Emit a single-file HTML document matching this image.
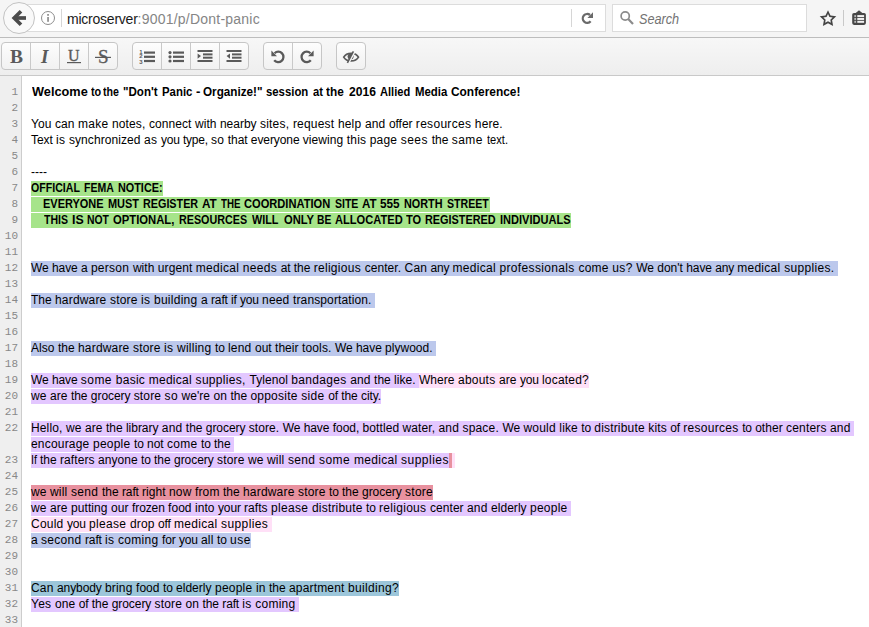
<!DOCTYPE html>
<html>
<head>
<meta charset="utf-8">
<title>Dont-panic</title>
<style>
html,body{margin:0;padding:0;}
body{width:869px;height:627px;overflow:hidden;position:relative;background:#fff;font-family:"Liberation Sans",sans-serif;}
svg{position:absolute;left:0;top:0;overflow:visible;}
/* ---------- browser chrome ---------- */
#chrome{position:absolute;left:0;top:0;width:869px;height:37px;background:#f5f5f5;border-bottom:1px solid #bdbdbd;box-sizing:content-box;}
#urlbar{position:absolute;left:20px;top:4px;width:584px;height:26px;border:1px solid #dcdcdc;background:#fff;box-sizing:content-box;}
#back{position:absolute;left:3px;top:2px;width:30px;height:30px;border-radius:16px;border:1px solid #c3c3c3;background:#f9f9f9;box-sizing:content-box;}
#urltext{position:absolute;left:67px;top:9px;letter-spacing:0.22px;font-size:14px;line-height:20px;color:#858585;white-space:nowrap;}
#urltext b{font-weight:normal;color:#1a1a1a;letter-spacing:-0.23px;}
#search{position:absolute;left:612px;top:4px;width:193px;height:26px;border:1px solid #dcdcdc;background:#fff;box-sizing:content-box;}
#searchtext{position:absolute;left:639px;top:9px;transform-origin:0 0;transform:scaleX(0.905);font-size:14px;line-height:20px;font-style:italic;color:#737373;}
.vsep{position:absolute;width:1px;background:#d6d6d6;}
/* ---------- etherpad toolbar ---------- */
#toolbar{position:absolute;left:0;top:38px;width:869px;height:37px;background:linear-gradient(#f7f7f7,#eeeeee);border-bottom:1px solid #c9c9c9;box-sizing:content-box;}
.grp{position:absolute;top:4px;height:26px;border:1px solid #c6c6c6;border-radius:4px;background:linear-gradient(#fdfdfd,#f1f1f1);box-sizing:content-box;}
.grp i{position:absolute;top:0;width:1px;height:26px;background:#c9c9c9;}
.gl{position:absolute;font-family:"Liberation Serif",serif;color:#5a5a5a;white-space:nowrap;}
/* ---------- editor ---------- */
#gutter{position:absolute;left:0;top:76px;width:21px;height:551px;background:#efefef;border-right:1px solid #cdcdcd;box-sizing:content-box;}
.n{position:absolute;left:0;width:18px;text-align:right;font-family:"Liberation Mono",monospace;font-size:11px;line-height:16px;height:16px;color:#888;}
.l{position:absolute;left:31px;height:15px;white-space:pre;font-size:12px;line-height:15px;color:#000;}
.l span{display:inline-block;height:15px;line-height:15px;vertical-align:top;white-space:pre;}
.l i{display:inline-block;font-style:normal;white-space:pre;height:15px;vertical-align:top;}
.l i b{display:inline-block;font-weight:inherit;transform-origin:0 0;white-space:pre;}
.l>b{position:absolute;top:0;font-weight:bold;transform-origin:0 0;white-space:pre;}
.B{font-weight:bold;}
.g{background:#a6e48a;font-weight:bold;}
.b{background:#bcc8ec;}
.p{background:#e3c7ff;}
.k{background:#ffe0f7;}
.r{background:#e8919f;}
.t{background:#9cc6da;}
</style>
</head>
<body>
<div id="chrome">
  <div id="urlbar"></div>
  <div id="back"></div>
  <div class="vsep" style="left:61px;top:9px;height:18px"></div>
  <div class="vsep" style="left:571px;top:9px;height:18px"></div>
  <div id="urltext"><b>microserver</b>:9001/p/Dont-panic</div>
  <div id="search"></div>
  <div id="searchtext">Search</div>
  <div class="vsep" style="left:843px;top:10px;height:16px;background:#c9c9c9"></div>
  <svg width="869" height="38" viewBox="0 0 869 38">
    <!-- back arrow -->
    <g fill="none" stroke="#4c4c4c" stroke-width="3.7">
      <polyline points="21,11.2 14.2,18 21,24.8" stroke-linejoin="miter"/>
      <line x1="14.5" y1="18" x2="26" y2="18"/>
    </g>
    <!-- info icon -->
    <circle cx="48" cy="18" r="6.5" fill="none" stroke="#8d8d8d" stroke-width="1"/>
    <rect x="47.2" y="17" width="1.7" height="4.8" fill="#8d8d8d"/>
    <rect x="47.2" y="14" width="1.7" height="1.8" fill="#8d8d8d"/>
    <!-- reload -->
    <path d="M590.0 15.0 A4.4 4.4 0 1 0 590.6 21.2" fill="none" stroke="#6a6a6a" stroke-width="2.3"/>
    <path d="M593 12.3 L593 18 L587.4 18 Z" fill="#6a6a6a"/>
    <!-- magnifier -->
    <circle cx="625.2" cy="16" r="4.1" fill="none" stroke="#8b8b8b" stroke-width="1.7"/>
    <line x1="628.2" y1="19" x2="633" y2="23.9" stroke="#8b8b8b" stroke-width="2.2"/>
    <!-- star -->
    <polygon points="828.00,10.20 830.53,15.42 836.27,16.21 832.09,20.23 833.11,25.94 828.00,23.20 822.89,25.94 823.91,20.23 819.73,16.21 825.47,15.42" fill="#454545"/>
    <polygon points="828.00,14.00 829.44,16.92 832.66,17.39 830.33,19.66 830.88,22.86 828.00,21.35 825.12,22.86 825.67,19.66 823.34,17.39 826.56,16.92" fill="#f5f5f5"/>
    <!-- bookmarks menu -->
    <rect x="852.2" y="12.9" width="13.7" height="12" rx="1.8" fill="#474747"/>
    <path d="M855.4 13.2 L859 10.2 L862.6 13.2 Z" fill="#474747"/>
    <g fill="#b9b9b9"><rect x="854.3" y="15.1" width="1.8" height="2"/><rect x="854.3" y="17.95" width="1.8" height="2"/><rect x="854.3" y="20.8" width="1.8" height="2"/></g>
    <g fill="#f2f2f2"><rect x="857.3" y="15.1" width="6.8" height="2"/><rect x="857.3" y="17.95" width="6.8" height="2"/><rect x="857.3" y="20.8" width="6.8" height="2"/></g>
  </svg>
</div>
<div id="toolbar">
  <div class="grp" style="left:1px;width:115px;"><i style="left:28px"></i><i style="left:57px"></i><i style="left:86px"></i></div>
  <div class="grp" style="left:132px;width:115px;"><i style="left:28px"></i><i style="left:57px"></i><i style="left:86px"></i></div>
  <div class="grp" style="left:263px;width:57px;"><i style="left:28px"></i></div>
  <div class="grp" style="left:336px;width:28px;"></div>
  <div class="gl" style="left:10px;top:8px;font-size:19.5px;line-height:22px;font-weight:bold;">B</div>
  <div class="gl" style="left:41px;top:8px;font-size:19px;line-height:22px;font-style:italic;font-weight:bold;">I</div>
  <div class="gl" style="left:68px;top:8px;font-size:16px;line-height:20px;-webkit-text-stroke:0.35px #5a5a5a;">U</div>
  <div class="gl" style="left:98px;top:8px;font-size:19px;line-height:22px;-webkit-text-stroke:0.35px #5a5a5a;">S</div>
  <svg width="869" height="38" viewBox="0 38 869 38">
    <g fill="#5a5a5a">
      <!-- underline / strike -->
      <rect x="67" y="62" width="14" height="1.2"/>
      <rect x="95" y="56.8" width="16" height="1.2"/>
      <!-- ordered list -->
      <rect x="144" y="51.5" width="11" height="2.2"/>
      <rect x="144" y="55.7" width="11" height="2.2"/>
      <rect x="144" y="59.9" width="11" height="2.2"/>
      <!-- unordered list -->
      <rect x="173" y="51.5" width="11" height="2.2"/>
      <rect x="173" y="55.7" width="11" height="2.2"/>
      <rect x="173" y="59.9" width="11" height="2.2"/>
      <circle cx="170" cy="52.6" r="1.6"/>
      <circle cx="170" cy="56.8" r="1.6"/>
      <circle cx="170" cy="61" r="1.6"/>
      <!-- indent -->
      <rect x="197.5" y="50" width="15" height="2"/>
      <rect x="203" y="53.4" width="9.5" height="2"/>
      <rect x="203" y="56.7" width="9.5" height="2"/>
      <rect x="197.5" y="60" width="15" height="2"/>
      <path d="M197.6 53.4 L201 56 L197.6 58.7 Z"/>
      <!-- outdent -->
      <rect x="226.5" y="50" width="15" height="2"/>
      <rect x="232" y="53.4" width="9.5" height="2"/>
      <rect x="232" y="56.7" width="9.5" height="2"/>
      <rect x="226.5" y="60" width="15" height="2"/>
      <path d="M230 53.4 L226.6 56 L230 58.7 Z"/>
    </g>
    <!-- ol numbers -->
    <g fill="#5a5a5a" font-family="Liberation Sans, sans-serif" font-size="6" font-weight="bold">
      <text x="139.3" y="53.6">1</text>
      <text x="139.3" y="58.4">2</text>
      <text x="139.3" y="63.6">3</text>
    </g>
    <!-- undo -->
    <path d="M274.2 60.2 A5.2 5.2 0 1 0 274.6 53.2" fill="none" stroke="#5a5a5a" stroke-width="2.3"/>
    <path d="M271.4 50.6 L271.4 56.2 L277 56.2 Z" fill="#5a5a5a"/>
    <!-- redo -->
    <path d="M310.8 60.2 A5.2 5.2 0 1 1 310.4 53.2" fill="none" stroke="#5a5a5a" stroke-width="2.3"/>
    <path d="M313.6 50.6 L313.6 56.2 L308 56.2 Z" fill="#5a5a5a"/>
    <!-- eye slash -->
    <path d="M343.7 57.1 C346.6 52.0 355.6 52.0 358.5 57.1 C355.6 62.2 346.6 62.2 343.7 57.1 Z" fill="none" stroke="#5a5a5a" stroke-width="1.7"/>
    <circle cx="350.6" cy="56.6" r="3" fill="#5a5a5a"/>
    <line x1="354.8" y1="51.2" x2="348.6" y2="62.8" stroke="#f6f6f6" stroke-width="2"/>
    <line x1="353.4" y1="51.4" x2="347.4" y2="62.8" stroke="#5a5a5a" stroke-width="1.6"/>
  </svg>
</div>
<div id="gutter"><div class="n" style="top:8px">1</div><div class="n" style="top:24px">2</div><div class="n" style="top:40px">3</div><div class="n" style="top:56px">4</div><div class="n" style="top:72px">5</div><div class="n" style="top:88px">6</div><div class="n" style="top:104px">7</div><div class="n" style="top:120px">8</div><div class="n" style="top:136px">9</div><div class="n" style="top:152px">10</div><div class="n" style="top:168px">11</div><div class="n" style="top:184px">12</div><div class="n" style="top:200px">13</div><div class="n" style="top:216px">14</div><div class="n" style="top:232px">15</div><div class="n" style="top:248px">16</div><div class="n" style="top:264px">17</div><div class="n" style="top:280px">18</div><div class="n" style="top:296px">19</div><div class="n" style="top:312px">20</div><div class="n" style="top:328px">21</div><div class="n" style="top:344px">22</div><div class="n" style="top:376px">23</div><div class="n" style="top:392px">24</div><div class="n" style="top:408px">25</div><div class="n" style="top:424px">26</div><div class="n" style="top:440px">27</div><div class="n" style="top:456px">28</div><div class="n" style="top:472px">29</div><div class="n" style="top:488px">30</div><div class="n" style="top:504px">31</div><div class="n" style="top:520px">32</div><div class="n" style="top:536px">33</div></div>
<div id="lines">
<div class="l" style="top:85px"><b style="left:0.5px;transform:scaleX(1.062)">Welcome </b><b style="left:60.387px;transform:scaleX(0.902)">to </b><b style="left:72.289px;transform:scaleX(0.886)">the </b><b style="left:92.278px;transform:scaleX(0.963)">"Don't </b><b style="left:131.188px;transform:scaleX(0.949)">Panic </b><b style="left:164.75px;transform:scaleX(1.1)">- </b><b style="left:172.312px;transform:scaleX(0.976)">Organize!" </b><b style="left:235.428px;transform:scaleX(0.945)">session </b><b style="left:281.848px;transform:scaleX(0.938)">at </b><b style="left:295.077px;transform:scaleX(0.983)">the </b><b style="left:317.922px;transform:scaleX(1.009)">2016 </b><b style="left:349.054px;transform:scaleX(0.924)">Allied </b><b style="left:383.688px;transform:scaleX(0.95)">Media </b><b style="left:420.404px;transform:scaleX(0.992)">Conference!</b></div>
<div class="l" style="top:117px"><span><i style="letter-spacing:0.099px">You </i><i style="letter-spacing:0.076px">can </i><i style="letter-spacing:0.26px">make </i><i style="letter-spacing:0.136px">notes, </i><i style="letter-spacing:0.076px">connect </i><i style="letter-spacing:0.06px">with </i><i style="letter-spacing:-0.007px">nearby </i><i style="letter-spacing:0.235px">sites, </i><i style="letter-spacing:0.203px">request </i><i style="letter-spacing:0.191px">help </i><i style="letter-spacing:0.158px">and </i><i style="letter-spacing:-0.025px">offer </i><i style="letter-spacing:0.294px">resources </i><i style="letter-spacing:0.126px">here.</i></span></div>
<div class="l" style="top:133px"><span><i style="letter-spacing:-0.073px">Text </i><i style="letter-spacing:0.33px">is </i><i style="letter-spacing:0.068px">synchronized </i><i style="letter-spacing:0.323px">as </i><i style="letter-spacing:-0.176px">you </i><i style="letter-spacing:-0.23px">type, </i><i style="letter-spacing:0.323px">so </i><i style="letter-spacing:-0.076px">that </i><i style="letter-spacing:-0.083px">everyone </i><i style="letter-spacing:0.075px">viewing </i><i style="letter-spacing:0.193px">this </i><i style="letter-spacing:0.189px">page </i><i style="letter-spacing:0.457px">sees </i><i style="letter-spacing:-0.008px">the </i><i style="letter-spacing:0.457px">same </i><i style="width:20.982px"><b style="transform:scaleX(0.925)">text.</b></i></span></div>
<div class="l" style="top:165px"><span><i style="letter-spacing:0.004px">----</i></span></div>
<div class="l" style="top:181px"><span class="g" style="width:132px"></span><b style="left:0.358px;transform:scaleX(0.884)">OFFICIAL </b><b style="left:53.343px;transform:scaleX(0.876)">FEMA </b><b style="left:87.322px;transform:scaleX(0.903)">NOTICE:</b></div>
<div class="l" style="top:197px"><span class="g" style="width:459px"></span><b style="left:12.213px;transform:scaleX(0.915)">EVERYONE </b><b style="left:76.616px;transform:scaleX(0.912)">MUST </b><b style="left:112.325px;transform:scaleX(0.899)">REGISTER </b><b style="left:171.133px;transform:scaleX(0.978)">AT </b><b style="left:189.998px;transform:scaleX(0.813)">THE </b><b style="left:213.337px;transform:scaleX(0.926)">COORDINATION </b><b style="left:304.171px;transform:scaleX(0.877)">SITE </b><b style="left:330.938px;transform:scaleX(0.964)">AT </b><b style="left:348.732px;transform:scaleX(0.982)">555 </b><b style="left:372.523px;transform:scaleX(0.902)">NORTH </b><b style="left:415.969px;transform:scaleX(0.883)">STREET</b></div>
<div class="l" style="top:213px"><span class="g" style="width:540px"></span><b style="left:12.79px;transform:scaleX(0.879)">THIS </b><b style="left:40.73px;transform:scaleX(1.027)">IS </b><b style="left:55.951px;transform:scaleX(0.865)">NOT </b><b style="left:82.33px;transform:scaleX(0.939)">OPTIONAL, </b><b style="left:148.328px;transform:scaleX(0.896)">RESOURCES </b><b style="left:221.1px;transform:scaleX(0.903)">WILL </b><b style="left:252.533px;transform:scaleX(0.933)">ONLY </b><b style="left:286.056px;transform:scaleX(0.858)">BE </b><b style="left:303.852px;transform:scaleX(0.927)">ALLOCATED </b><b style="left:374.885px;transform:scaleX(0.92)">TO </b><b style="left:394.121px;transform:scaleX(0.906)">REGISTERED </b><b style="left:468.709px;transform:scaleX(0.921)">INDIVIDUALS</b></div>
<div class="l" style="top:261px"><span class="b"><i style="letter-spacing:-0.05px">We </i><i style="letter-spacing:-0.079px">have </i><i style="letter-spacing:-0.014px">a </i><i style="letter-spacing:0.274px">person </i><i style="letter-spacing:0.056px">with </i><i style="letter-spacing:0.085px">urgent </i><i style="letter-spacing:0.282px">medical </i><i style="letter-spacing:0.32px">needs </i><i style="letter-spacing:-0.12px">at </i><i style="letter-spacing:-0.01px">the </i><i style="letter-spacing:0.291px">religious </i><i style="letter-spacing:0.074px">center. </i><i style="letter-spacing:0.152px">Can </i><i style="letter-spacing:-0.179px">any </i><i style="letter-spacing:0.282px">medical </i><i style="letter-spacing:0.347px">professionals </i><i style="letter-spacing:0.254px">come </i><i style="letter-spacing:0.321px">us? </i><i style="letter-spacing:-0.05px">We </i><i style="letter-spacing:-0.003px">don't </i><i style="letter-spacing:-0.079px">have </i><i style="letter-spacing:-0.179px">any </i><i style="letter-spacing:0.282px">medical </i><i style="letter-spacing:0.323px">supplies. </i></span></div>
<div class="l" style="top:293px"><span class="b"><i style="letter-spacing:-0.004px">The </i><i style="letter-spacing:0.181px">hardware </i><i style="letter-spacing:0.164px">store </i><i style="letter-spacing:0.333px">is </i><i style="letter-spacing:0.255px">building </i><i style="letter-spacing:-0.008px">a </i><i style="letter-spacing:-0.134px">raft </i><i style="letter-spacing:-0.115px">if </i><i style="letter-spacing:-0.172px">you </i><i style="letter-spacing:0.194px">need </i><i style="letter-spacing:0.122px">transportation. </i></span></div>
<div class="l" style="top:341px"><span class="b"><i style="letter-spacing:0.062px">Also </i><i style="letter-spacing:-0.004px">the </i><i style="letter-spacing:0.181px">hardware </i><i style="letter-spacing:0.164px">store </i><i style="letter-spacing:0.333px">is </i><i style="letter-spacing:0.248px">willing </i><i style="letter-spacing:-0.115px">to </i><i style="letter-spacing:0.194px">lend </i><i style="letter-spacing:-0.004px">out </i><i style="letter-spacing:0.052px">their </i><i style="letter-spacing:0.141px">tools. </i><i style="letter-spacing:-0.042px">We </i><i style="letter-spacing:-0.072px">have </i><i style="letter-spacing:0.033px">plywood. </i></span></div>
<div class="l" style="top:373px"><span class="p"><i style="letter-spacing:-0.06px">We </i><i style="letter-spacing:-0.087px">have </i><i style="letter-spacing:0.445px">some </i><i style="letter-spacing:0.259px">basic </i><i style="letter-spacing:0.274px">medical </i><i style="letter-spacing:0.316px">supplies, </i><i style="letter-spacing:0.067px">Tylenol </i><i style="letter-spacing:0.31px">bandages </i><i style="letter-spacing:0.145px">and </i><i style="letter-spacing:-0.017px">the </i><i style="letter-spacing:0.041px">like. </i></span><span class="k"><i style="letter-spacing:0.052px">Where </i><i style="letter-spacing:0.232px">abouts </i><i style="letter-spacing:0.078px">are </i><i style="letter-spacing:-0.172px">you </i><i style="letter-spacing:0.203px">located?</i></span></div>
<div class="l" style="top:389px"><span class="p"><i style="letter-spacing:0.086px">we </i><i style="letter-spacing:0.063px">are </i><i style="letter-spacing:-0.018px">the </i><i style="letter-spacing:-0.06px">grocery </i><i style="letter-spacing:0.149px">store </i><i style="letter-spacing:0.312px">so </i><i style="letter-spacing:0.045px">we're </i><i style="letter-spacing:0.088px">on </i><i style="letter-spacing:-0.018px">the </i><i style="letter-spacing:0.239px">opposite </i><i style="letter-spacing:0.313px">side </i><i style="letter-spacing:-0.127px">of </i><i style="letter-spacing:-0.018px">the </i><i style="letter-spacing:-0.102px">city.</i></span></div>
<div class="l" style="top:421px"><span class="p"><i style="letter-spacing:0.135px">Hello, </i><i style="letter-spacing:0.096px">we </i><i style="letter-spacing:0.072px">are </i><i style="letter-spacing:-0.01px">the </i><i style="letter-spacing:-0.007px">library </i><i style="letter-spacing:0.153px">and </i><i style="letter-spacing:-0.01px">the </i><i style="letter-spacing:-0.051px">grocery </i><i style="letter-spacing:0.086px">store. </i><i style="letter-spacing:-0.05px">We </i><i style="letter-spacing:-0.079px">have </i><i style="letter-spacing:-0.011px">food, </i><i style="letter-spacing:0.072px">bottled </i><i style="letter-spacing:0.085px">water, </i><i style="letter-spacing:0.153px">and </i><i style="letter-spacing:0.178px">space. </i><i style="letter-spacing:-0.05px">We </i><i style="letter-spacing:0.211px">would </i><i style="letter-spacing:0.126px">like </i><i style="letter-spacing:-0.12px">to </i><i style="letter-spacing:0.173px">distribute </i><i style="letter-spacing:0.126px">kits </i><i style="letter-spacing:-0.12px">of </i><i style="letter-spacing:0.29px">resources </i><i style="letter-spacing:-0.12px">to </i><i style="letter-spacing:0.046px">other </i><i style="letter-spacing:0.157px">centers </i><i style="letter-spacing:0.153px">and </i></span></div>
<div class="l" style="top:437px"><span class="p"><i style="letter-spacing:0.195px">encourage </i><i style="letter-spacing:0.232px">people </i><i style="letter-spacing:-0.115px">to </i><i style="letter-spacing:-0.004px">not </i><i style="letter-spacing:0.263px">come </i><i style="letter-spacing:-0.115px">to </i><i style="letter-spacing:-0.004px">the </i></span></div>
<div class="l" style="top:453px"><span class="p"><i style="width:9px"><b style="transform:scaleX(0.899)">If </b></i><i style="letter-spacing:-0.004px">the </i><i style="letter-spacing:0.082px">rafters </i><i style="letter-spacing:0.042px">anyone </i><i style="letter-spacing:-0.115px">to </i><i style="letter-spacing:-0.004px">the </i><i style="letter-spacing:-0.045px">grocery </i><i style="letter-spacing:0.164px">store </i><i style="letter-spacing:0.104px">we </i><i style="letter-spacing:0.2px">will </i><i style="letter-spacing:0.328px">send </i><i style="letter-spacing:0.463px">some </i><i style="letter-spacing:0.289px">medical </i><i style="letter-spacing:0.496px">supplies</i></span><span class="r"><i style="width:3px"><b style="transform:scaleX(0.897)"> </b></i></span><span class="k"><i style="width:3px"><b style="transform:scaleX(0.897)"> </b></i></span></div>
<div class="l" style="top:485px"><span class="r"><i style="letter-spacing:0.104px">we </i><i style="letter-spacing:0.2px">will </i><i style="letter-spacing:0.328px">send </i><i style="letter-spacing:-0.004px">the </i><i style="letter-spacing:-0.134px">raft </i><i style="letter-spacing:0.052px">right </i><i style="letter-spacing:0.16px">now </i><i style="letter-spacing:0.131px">from </i><i style="letter-spacing:-0.004px">the </i><i style="letter-spacing:0.181px">hardware </i><i style="letter-spacing:0.164px">store </i><i style="letter-spacing:-0.115px">to </i><i style="letter-spacing:-0.004px">the </i><i style="letter-spacing:-0.045px">grocery </i><i style="letter-spacing:0.263px">store</i></span></div>
<div class="l" style="top:501px"><span class="p"><i style="letter-spacing:0.104px">we </i><i style="letter-spacing:0.078px">are </i><i style="letter-spacing:0.078px">putting </i><i style="letter-spacing:0.078px">our </i><i style="letter-spacing:-0.098px">frozen </i><i style="letter-spacing:0.059px">food </i><i style="letter-spacing:0.062px">into </i><i style="letter-spacing:-0.138px">your </i><i style="letter-spacing:0.055px">rafts </i><i style="letter-spacing:0.328px">please </i><i style="letter-spacing:0.179px">distribute </i><i style="letter-spacing:-0.115px">to </i><i style="letter-spacing:0.297px">religious </i><i style="letter-spacing:0.045px">center </i><i style="letter-spacing:0.16px">and </i><i style="letter-spacing:0.039px">elderly </i><i style="letter-spacing:0.232px">people </i></span></div>
<div class="l" style="top:517px"><span class="k"><i style="letter-spacing:0.219px">Could </i><i style="letter-spacing:-0.172px">you </i><i style="letter-spacing:0.328px">please </i><i style="letter-spacing:0.128px">drop </i><i style="letter-spacing:-0.117px">off </i><i style="letter-spacing:0.289px">medical </i><i style="letter-spacing:0.403px">supplies </i></span></div>
<div class="l" style="top:533px"><span class="b"><i style="letter-spacing:-0.008px">a </i><i style="letter-spacing:0.281px">second </i><i style="letter-spacing:-0.134px">raft </i><i style="letter-spacing:0.333px">is </i><i style="letter-spacing:0.281px">coming </i><i style="letter-spacing:-0.086px">for </i><i style="letter-spacing:-0.172px">you </i><i style="letter-spacing:0.164px">all </i><i style="letter-spacing:-0.115px">to </i><i style="letter-spacing:0.547px">use</i></span></div>
<div class="l" style="top:581px"><span class="t"><i style="letter-spacing:0.16px">Can </i><i style="letter-spacing:-0.088px">anybody </i><i style="letter-spacing:0.161px">bring </i><i style="letter-spacing:0.059px">food </i><i style="letter-spacing:-0.115px">to </i><i style="letter-spacing:0.039px">elderly </i><i style="letter-spacing:0.232px">people </i><i style="letter-spacing:0.104px">in </i><i style="letter-spacing:-0.004px">the </i><i style="letter-spacing:0.163px">apartment </i><i style="letter-spacing:0.328px">building?</i></span></div>
<div class="l" style="top:597px"><span class="p"><i style="letter-spacing:0.247px">Yes </i><i style="letter-spacing:0.138px">one </i><i style="letter-spacing:-0.131px">of </i><i style="letter-spacing:-0.022px">the </i><i style="letter-spacing:-0.065px">grocery </i><i style="letter-spacing:0.145px">store </i><i style="letter-spacing:0.083px">on </i><i style="letter-spacing:-0.022px">the </i><i style="letter-spacing:-0.149px">raft </i><i style="letter-spacing:0.317px">is </i><i style="letter-spacing:0.258px">coming </i></span></div>
</div>
</body>
</html>
